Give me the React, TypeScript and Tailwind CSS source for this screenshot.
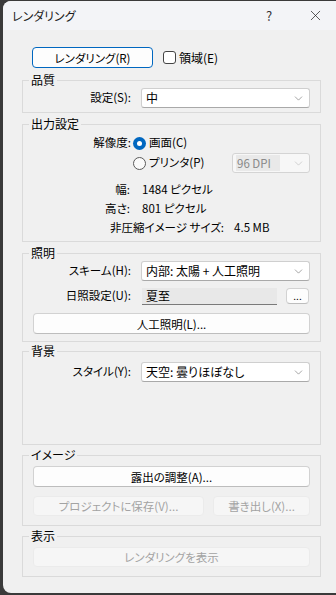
import React from "react";
import { ChevronDown, X } from "lucide-react";

const font =
  "font-['Noto_Sans_CJK_JP','Noto_Sans_CJK_SC',sans-serif] [font-feature-settings:'palt']";

// dropdown box
const Select = ({
  value,
  className = "",
  disabled = false,
}: {
  value: string;
  className?: string;
  disabled?: boolean;
}) => (
  <div
    className={`h-[20px] flex items-center rounded-[3px] border ${
      disabled
        ? "border-[#d4d4d4] bg-[#f7f7f7] text-[#8a8a8a] pl-[3px]"
        : "border-[#cfcfcf] border-b-[#a9a9a9] bg-white text-black pl-[4px]"
    } pr-[4px] ${className}`}
  >
    <span
      className={`flex-1 leading-[16px] ${disabled ? "bg-[#e9e9e9] pl-[1px] mr-[12px]" : ""}`}
    >
      {value}
    </span>
    <ChevronDown
      size={13}
      strokeWidth={1}
      className={disabled ? "text-[#b0b0b0]" : "text-[#5c5c5c]"}
    />
  </div>
);

const Btn = ({
  children,
  className = "",
  disabled = false,
}: {
  children: React.ReactNode;
  className?: string;
  disabled?: boolean;
}) => (
  <button
    className={`flex items-center justify-center rounded-[4px] border leading-[16px] ${
      disabled
        ? "border-[#ebebeb] bg-[#f6f6f6] text-[#a3a3a3]"
        : "border-[#d2d2d2] border-b-[#bdbdbd] bg-[#fdfdfd] text-black"
    } ${className}`}
  >
    {children}
  </button>
);

const Group = ({
  title,
  className = "",
  children,
}: {
  title: string;
  className?: string;
  children: React.ReactNode;
}) => (
  <fieldset
    className={`w-[299px] border border-[#dadada] pl-[10px] pr-[10px] ${className}`}
  >
    <legend className="-ml-[4px] px-[2px] leading-[16px] text-[12px] text-black">{title}</legend>
    {children}
  </fieldset>
);

const Label = ({ children, w = "w-[98px]" }: { children: React.ReactNode; w?: string }) => (
  <span className={`${w} shrink-0 text-right`}>{children}</span>
);

export default function App() {
  return (
    <div className={`h-[595px] w-[336px] overflow-hidden bg-[#3a3a3a] pl-[3px] pt-[1px] text-[11.5px] text-black ${font}`}>
      <div className="h-[592px] w-[335px] rounded-l-[8px] bg-[#f0f0f0] flex flex-col overflow-hidden">
        {/* title bar */}
        <div className="h-[29px] shrink-0 flex items-center bg-[#f3f4f7] pl-[9px]">
          <span className="flex-1 text-[12px] text-[#1b1b1b]">レンダリング</span>
          <span className="w-[46px] text-center text-[13px] text-[#333]">?</span>
          <span className="w-[46px] flex justify-center text-[#1b1b1b]">
            <X size={17} strokeWidth={1} />
          </span>
        </div>

        <div className="pl-[19px] flex flex-col">
          <div className="mt-[17px] ml-[10px] flex items-center">
            <Btn className="w-[121px] h-[21px] !border-[#0067c0]">レンダリング(R)</Btn>
            <span className="ml-[10px] w-[13px] h-[13px] rounded-[3px] border border-[#444] bg-white" />
            <span className="ml-[3px] text-[12px]">領域(E)</span>
          </div>

          <Group title="品質" className="mt-[4px] pb-[4px]">
            <div className="h-[20px] flex items-center">
              <Label>設定(S):</Label>
              <Select value="中" className="ml-[10px] w-[169px] text-[12px]" />
            </div>
          </Group>

          <Group title="出力設定" className="mt-[3px] pt-[1px] pb-[4px]">
            <div className="h-[20px] flex items-center">
              <Label>解像度:</Label>
              <span className="ml-[2px] w-[13px] h-[13px] rounded-full bg-[#0067c0] flex items-center justify-center">
                <span className="w-[5px] h-[5px] rounded-full bg-white" />
              </span>
              <span className="ml-[3px]">画面(C)</span>
            </div>
            <div className="h-[20px] flex items-center">
              <span className="w-[98px] shrink-0" />
              <span className="ml-[2px] w-[13px] h-[13px] rounded-full border border-[#5a5a5a] bg-[#fafafa]" />
              <span className="ml-[3px]">プリンタ(P)</span>
              <Select value="96 DPI" disabled className="ml-auto w-[78px]" />
            </div>
            <div className="mt-[7px] h-[19px] flex items-center">
              <Label w="w-[97px]">幅:</Label>
              <span className="ml-[12px]">1484 ピクセル</span>
            </div>
            <div className="h-[19px] flex items-center">
              <Label w="w-[97px]">高さ:</Label>
              <span className="ml-[12px]">801 ピクセル</span>
            </div>
            <div className="h-[19px] flex items-center pl-[77px]">
              <span>非圧縮イメージ サイズ:</span>
              <span className="ml-[10px]">4.5 MB</span>
            </div>
          </Group>

          <Group title="照明" className="mt-[3px] pb-[7px]">
            <div className="h-[20px] flex items-center">
              <Label>スキーム(H):</Label>
              <Select value="内部: 太陽 + 人工照明" className="ml-[10px] w-[169px] text-[12px]" />
            </div>
            <div className="mt-[5px] h-[20px] flex items-center">
              <Label>日照設定(U):</Label>
              <span className="ml-[11px] w-[135px] h-[17px] flex items-center bg-[#e8e8e8] border-b border-[#7a7a7a] pl-[4px] text-[12px]">
                夏至
              </span>
              <Btn className="ml-[9px] w-[23px] h-[16px] text-[10px]">...</Btn>
            </div>
            <Btn className="mt-[7px] w-full h-[21px]">人工照明(L)...</Btn>
          </Group>

          <Group title="背景" className="mt-[1px] h-[102px]">
            <div className="mt-[3px] h-[20px] flex items-center">
              <Label>スタイル(Y):</Label>
              <Select value="天空: 曇りほぼなし" className="ml-[10px] w-[169px] text-[12px]" />
            </div>
          </Group>

          <Group title="イメージ" className="mt-[2px] pb-[9px]">
            <Btn className="mt-[3px] w-full h-[21px]">露出の調整(A)...</Btn>
            <div className="mt-[9px] h-[20px] flex">
              <Btn disabled className="w-[171px] h-[20px]">プロジェクトに保存(V)...</Btn>
              <Btn disabled className="ml-auto w-[97px] h-[20px]">書き出し(X)...</Btn>
            </div>
          </Group>

          <Group title="表示" className="mt-[2px] pb-[9px]">
            <Btn disabled className="mt-[3px] w-full h-[20px]">レンダリングを表示</Btn>
          </Group>
        </div>
      </div>
    </div>
  );
}
